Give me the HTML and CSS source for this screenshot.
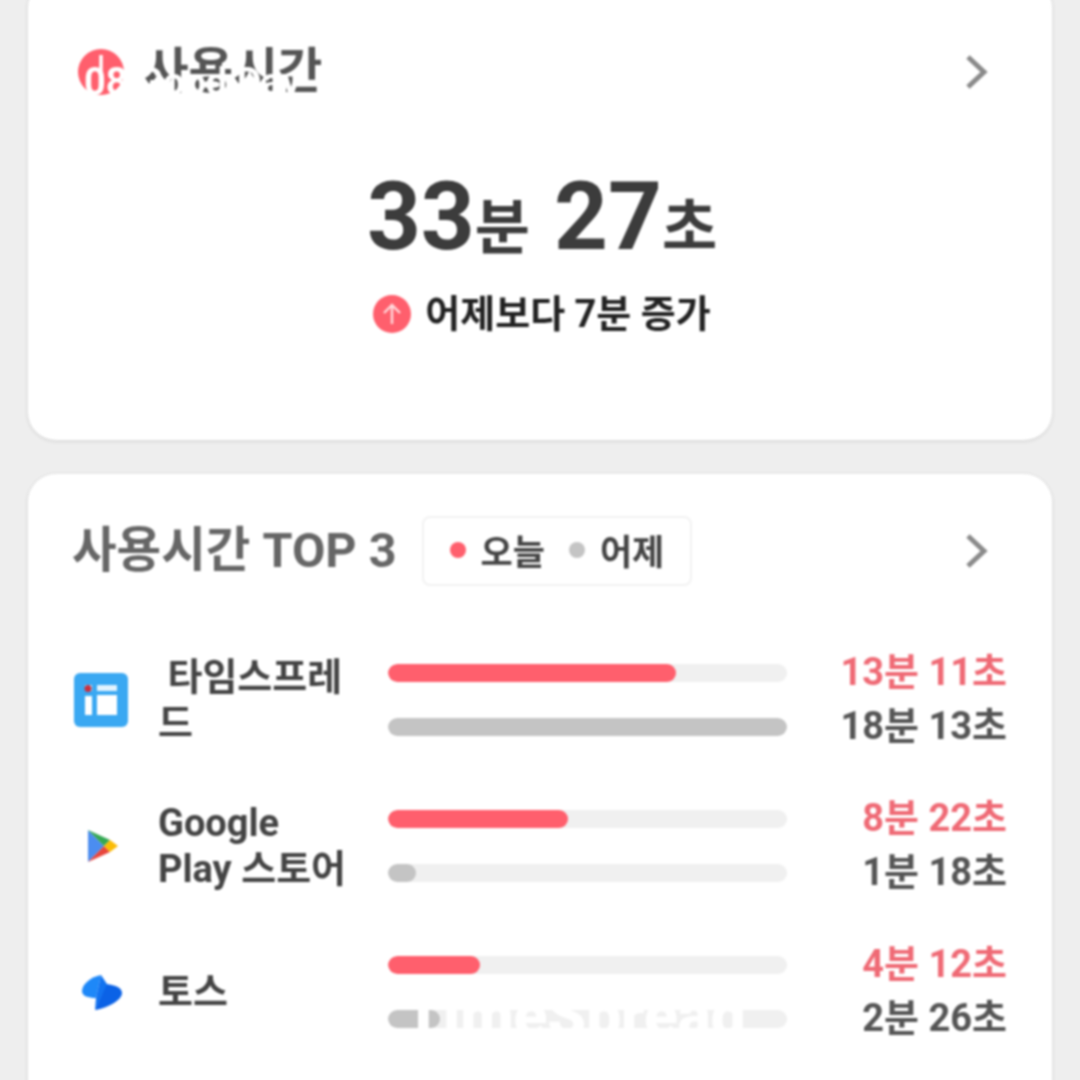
FILE: index.html

```html
<!doctype html>
<html lang="ko">
<head>
	<meta charset="utf-8">
	<title>사용시간</title>
	<link rel="stylesheet" href="styles.css">
</head>
<body>
<div class="page">
	<section class="card card-total">
		<div class="card-head">
			<svg class="head-icon" viewBox="0 0 46 46"><circle cx="23" cy="23" r="23" fill="#ff5f6d"/><path d="M23 6v18" stroke="#fff" stroke-width="3.5" fill="none"/></svg>
			<h2 class="head-title">사용시간</h2>
			<svg class="chevron" viewBox="0 0 24 36"><path d="M3 3l16 15L3 33" stroke="#8a8a8a" stroke-width="5" fill="none"/></svg>
		</div>
		<div class="total-time"><b>33</b><span class="unit unit-gap">분</span><b>27</b><span class="unit">초</span></div>
		<div class="total-diff">
			<svg class="diff-icon" viewBox="0 0 38 38"><circle cx="19" cy="19" r="19" fill="#ff5f6d"/><path d="M19 29V10M11 18l8-8 8 8" stroke="#ffd9dc" stroke-width="2.4" fill="none"/></svg>
			<span>어제보다 7분 증가</span>
		</div>
		<div class="stamp stamp-top">08 Good Day</div>
	</section>

	<section class="card card-top">
		<div class="card-head">
			<h2 class="head-title head-title-top">사용시간 TOP 3</h2>
			<div class="legend">
				<i class="dot dot-today"></i><span>오늘</span>
				<i class="dot dot-yesterday"></i><span>어제</span>
			</div>
			<svg class="chevron" viewBox="0 0 24 36"><path d="M3 3l16 15L3 33" stroke="#8a8a8a" stroke-width="5" fill="none"/></svg>
		</div>

		<div class="app-list">
			<div class="app-row">
				<svg class="app-icon" viewBox="0 0 54 54">
					<rect width="54" height="54" rx="6" fill="#3aa8f2"/>
					<rect x="11" y="12" width="7" height="6" fill="#c9e6fb"/>
					<rect x="23" y="12" width="20" height="6" fill="#e3f3fe"/>
					<rect x="11" y="23" width="7" height="19" fill="#fff"/>
					<rect x="23" y="22" width="20" height="20" fill="#fff"/>
					<circle cx="14" cy="15.500" r="3.500" fill="#c9303f"/>
				</svg>
				<div class="app-name"> 타임스프레드</div>
				<div class="bars">
					<div class="track"><div class="fill fill-today" style="width:72.2%"></div></div>
					<div class="track"><div class="fill fill-yesterday" style="width:100%"></div></div>
				</div>
				<div class="times">
					<div class="time-today">13분 11초</div>
					<div class="time-yesterday">18분 13초</div>
				</div>
			</div>

			<div class="app-row">
				<svg class="app-icon" viewBox="0 0 54 54">
					<path d="M14 11v32l16-16z" fill="#4b8df0"/>
					<path d="M14 11l22 10-6 6z" fill="#34a853"/>
					<path d="M14 43l22-10-6-6z" fill="#e8453c"/>
					<path d="M36 21l8 6-8 6-6-6z" fill="#fbbc04"/>
				</svg>
				<div class="app-name">Google Play 스토어</div>
				<div class="bars">
					<div class="track"><div class="fill fill-today" style="width:45%"></div></div>
					<div class="track"><div class="fill fill-yesterday" style="width:7%"></div></div>
				</div>
				<div class="times">
					<div class="time-today">8분 22초</div>
					<div class="time-yesterday">1분 18초</div>
				</div>
			</div>

			<div class="app-row">
				<svg class="app-icon" viewBox="0 0 54 54">
					<path d="M27 10C17 12 8 19 8 26c0 5 6 7 14 7z" fill="#1e88f8"/>
					<path d="M21 45c9-1 27-9 27-17 0-5-6-8-16-9z" fill="#0b62e6"/>
					<path d="M27 10l6 9-12 26 1-12z" fill="#1273f0"/>
				</svg>
				<div class="app-name">토스</div>
				<div class="bars">
					<div class="track"><div class="fill fill-today" style="width:23%"></div></div>
					<div class="track"><div class="fill fill-yesterday" style="width:13%"></div></div>
				</div>
				<div class="times">
					<div class="time-today">4분 12초</div>
					<div class="time-yesterday">2분 26초</div>
				</div>
			</div>
		</div>
		<div class="stamp stamp-bottom">TimeSpread</div>
	</section>
</div>
</body>
</html>
```

FILE: styles.css

```css
* { margin: 0; padding: 0; box-sizing: border-box; }

html, body { height: 100%; overflow: hidden; background: #eeeeee; }

body { font-family: Roboto, "Noto Sans CJK KR", sans-serif; color: #444; }

.page { display: flex; flex-direction: column; gap: 34px; padding: 0 28px; margin-top: -20px; filter: blur(0.9px); }

.card { position: relative; background: #fff; border-radius: 28px; box-shadow: 0 1px 4px rgba(0, 0, 0, .12); }

.card-total { height: 460px; padding: 57px 46px 0 50px; }

.card-top { height: 640px; padding: 42px 46px 0 44px; }

.card-head { display: flex; align-items: center; height: 70px; }

.head-icon { width: 46px; height: 46px; margin-right: 20px; }

.head-title { font-size: 48.500px; font-weight: 700; color: #555; line-height: 70px; white-space: nowrap; }

.head-title-top { color: #666; margin-right: 25px; }

.chevron { width: 24px; height: 36px; margin-left: auto; margin-right: 17px; }

.total-time { margin-top: 65px; text-align: center; font-weight: 700; color: #3c3c3c; line-height: 90px; white-space: nowrap; }

.total-time b { font-size: 94px; font-weight: 700; }

.unit { font-size: 60px; font-weight: 700; }

.unit-gap { margin-right: 24px; }

.total-diff { display: flex; align-items: center; justify-content: center; gap: 14px; font-size: 38px; font-weight: 700; color: #222; line-height: 50px; }

.diff-icon { width: 38px; height: 38px; }

.legend { display: flex; align-items: center; height: 70px; padding: 0 26px 3px; border: 2px solid #f2f2f2; border-radius: 8px; font-size: 35px; font-weight: 700; color: #444; }

.dot { width: 16px; height: 16px; border-radius: 50%; margin-right: 15px; }

.dot-today { background: #ff5f6d; }

.dot-yesterday { background: #c4c4c4; margin-left: 24px; }

.app-list { display: flex; flex-direction: column; gap: 38px; margin-top: 59px; padding-left: 2px; }

.app-row { display: grid; grid-template-columns: 54px 190px 399px 1fr; align-items: center; height: 108px; }

.app-icon { width: 54px; height: 54px; }

.app-name { margin-left: 30px; width: 196px; padding-bottom: 1px; font-size: 38px; font-weight: 700; line-height: 46px; color: #444; white-space: pre-wrap; }

.bars { display: flex; flex-direction: column; gap: 36px; margin-left: 70px; width: 399px; }

.track { height: 18px; border-radius: 9px; background: #f0f0f0; overflow: hidden; }

.fill { height: 100%; border-radius: 9px; }

.fill-today { background: #ff5f6d; }

.fill-yesterday { background: #c4c4c4; }

.times { padding-bottom: 2px; text-align: right; font-size: 38px; font-weight: 700; line-height: 54px; white-space: nowrap; margin-right: -1px; }

.time-today { color: #ef6a75; }

.time-yesterday { color: #555; }

.stamp { position: absolute; color: #fff; font-weight: 700; white-space: nowrap; }

.stamp-top { left: 56px; top: 80px; font-size: 38px; }

.stamp-bottom { left: 376px; top: 504px; font-size: 62px; font-weight: 900; }
```
